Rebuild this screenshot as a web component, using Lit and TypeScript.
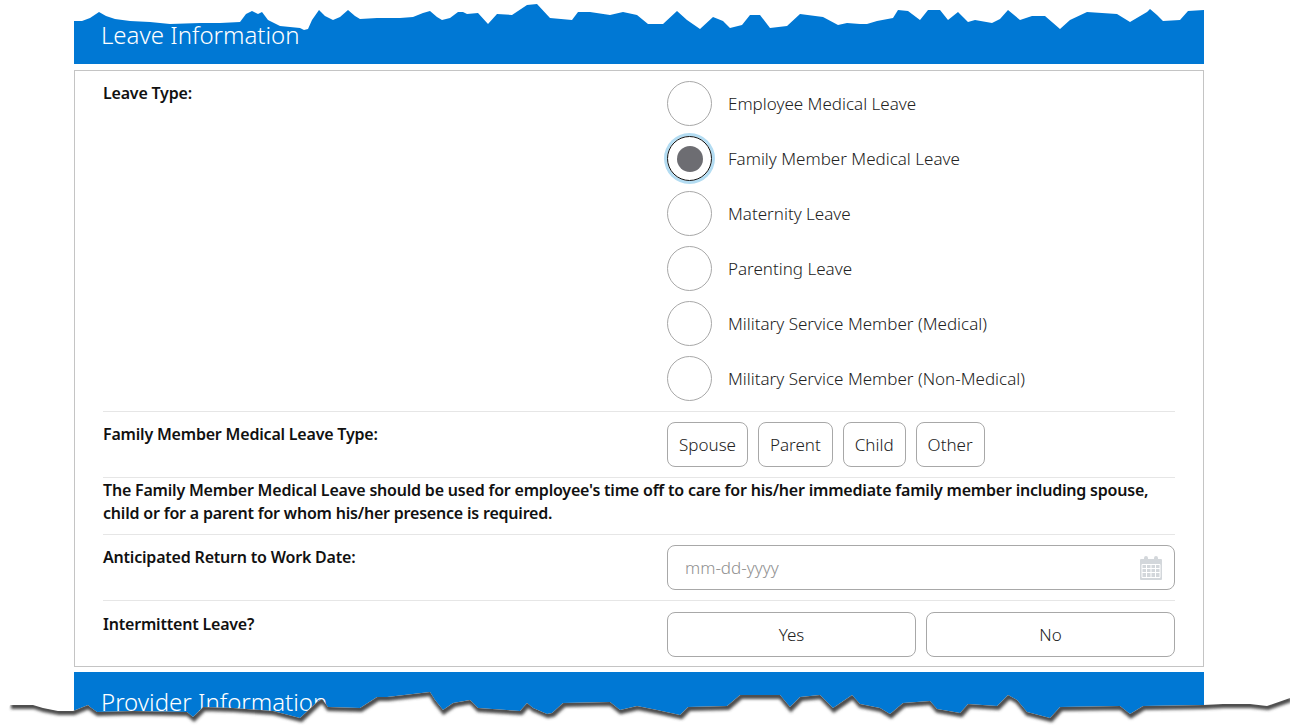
import { css, html, LitElement } from "lit";
import { customElement } from "lit/decorators.js";

// torn paper edges, traced from the screenshot as x,y pairs
const TOP_EDGE =
  "74,21 82,21 90,18 99,12 106,16 115,19 130,21 150,22 170,24 200,23 220,23 240,22 246,14 252,11 258,14 262,12 268,20 280,26 300,28 304,30 308,29 312,20 319,10 325,16 333,20 340,17 348,10 355,16 360,19 377,18 400,18 413,17 423,13 430,11 437,17 442,20 450,18 458,12 463,12 467,14 478,13 488,24 497,14 512,15 527,5 537,4 550,18 572,20 578,12 590,12 610,15 623,12 637,15 648,24 663,24 677,11 687,20 700,29 713,17 723,21 730,28 742,25 750,15 760,15 770,28 787,26 800,14 823,17 838,25 847,23 860,24 867,24 877,21 893,18 898,10 908,11 920,20 928,10 940,10 948,20 958,12 968,22 975,20 992,23 1000,19 1008,10 1020,20 1032,16 1045,16 1060,29 1070,20 1087,12 1117,14 1130,22 1147,12 1150,9 1157,15 1163,21 1180,20 1188,11 1204,10";

const BOTTOM_EDGE =
  "10,705 33,705 43,708 58,711 73,711 88,705 90,707 97,712 133,711 187,712 193,717 203,707 233,708 273,711 300,718 317,702 322,699 328,707 360,708 377,697 387,697 430,692 435,700 443,710 453,703 470,700 478,708 520,711 527,703 533,708 547,714 552,713 563,703 610,702 620,710 637,706 657,710 680,715 688,707 727,706 740,695 780,695 790,707 800,697 820,695 833,708 852,695 860,704 880,708 890,714 903,703 930,701 937,709 960,713 968,704 997,706 1008,695 1017,700 1027,712 1050,718 1060,707 1120,706 1130,714 1143,706 1203,705 1223,704 1250,704 1267,706 1290,698";

const LEAVE_TYPES = [
  "Employee Medical Leave",
  "Family Member Medical Leave",
  "Maternity Leave",
  "Parenting Leave",
  "Military Service Member (Medical)",
  "Military Service Member (Non-Medical)",
];

const RELATIONS = ["Spouse", "Parent", "Child", "Other"];

@customElement("app-root")
export class AppRoot extends LitElement {
  static styles = css`
    :host {
      display: block;
      position: relative;
      width: 1290px;
      height: 725px;
      overflow: hidden;
      background: #fff;
      font-family: "Noto Sans", sans-serif;
      color: #222;
    }

    .page {
      width: 1130px;
      margin-left: 74px;
    }

    .section-head {
      background: #0078d4;
      color: #fff;
      font-size: 24px;
      font-weight: 300;
      line-height: 30px;
      padding-left: 27px;
    }
    .section-head.first {
      height: 64px;
      padding-top: 20px;
      box-sizing: border-box;
    }
    .section-head.next {
      height: 53px;
      margin-top: 5px;
      padding-top: 15px;
      box-sizing: border-box;
    }

    .panel {
      margin-top: 6px;
      height: 597px;
      box-sizing: border-box;
      border: 1px solid #c4c4c4;
      padding: 0 28px;
    }

    .row {
      display: grid;
      grid-template-columns: 564px 508px;
      padding: 10px 0;
      border-bottom: 1px solid #e6e6e6;
    }
    .row.last {
      border-bottom: 0;
      padding-top: 11px;
    }
    .row.note {
      display: block;
      padding: 1px 0 9px;
    }

    .label,
    .note {
      font-size: 16px;
      font-weight: 600;
      line-height: 23px;
      color: #111;
      letter-spacing: -0.2px;
    }
    .label {
      padding-top: 1px;
    }

    .radios {
      display: flex;
      flex-direction: column;
      gap: 10px;
    }
    .radio {
      display: flex;
      align-items: center;
      gap: 16px;
      height: 45px;
      font-size: 17px;
      font-weight: 300;
    }
    .dot {
      width: 45px;
      height: 45px;
      box-sizing: border-box;
      border: 1px solid #a8a8a8;
      border-radius: 50%;
      display: flex;
      align-items: center;
      justify-content: center;
    }
    .dot.on {
      border-color: #111;
      box-shadow: 0 0 0 3px #b3dcf2;
    }
    .dot.on::after {
      content: "";
      width: 26px;
      height: 26px;
      border-radius: 50%;
      background: #6d6d72;
    }

    .choices {
      display: flex;
      gap: 10px;
    }
    button {
      height: 45px;
      box-sizing: border-box;
      background: #fff;
      border: 1px solid #a8a8a8;
      border-radius: 8px;
      font: 300 17px "Noto Sans", sans-serif;
      color: #222;
      padding: 0 11px;
    }
    .split {
      display: grid;
      grid-template-columns: 1fr 1fr;
      gap: 10px;
    }

    .date {
      height: 45px;
      box-sizing: border-box;
      border: 1px solid #a8a8a8;
      border-radius: 8px;
      display: flex;
      align-items: center;
      justify-content: space-between;
      padding: 0 12px 0 17px;
      font-size: 17px;
      font-weight: 300;
      color: #8f8f8f;
    }

    .tear {
      position: absolute;
      inset: 0;
      pointer-events: none;
    }
  `;

  render() {
    return html`
      <div class="page">
        <div class="section-head first">Leave Information</div>
        <div class="panel">
          <div class="row">
            <div class="label">Leave Type:</div>
            <div class="radios">
              ${LEAVE_TYPES.map(
                (t, i) => html`
                  <div class="radio">
                    <span class="dot ${i === 1 ? "on" : ""}"></span>${t}
                  </div>
                `
              )}
            </div>
          </div>
          <div class="row">
            <div class="label">Family Member Medical Leave Type:</div>
            <div class="choices">
              ${RELATIONS.map((r) => html`<button>${r}</button>`)}
            </div>
          </div>
          <div class="row note">
            The Family Member Medical Leave should be used for employee's time
            off to care for his/her immediate family member including spouse,
            child or for a parent for whom his/her presence is required.
          </div>
          <div class="row">
            <div class="label">Anticipated Return to Work Date:</div>
            <div class="date">
              <span>mm-dd-yyyy</span>
              <svg width="22" height="24" viewBox="0 0 22 24">
                <path
                  fill="#d3d7db"
                  d="M1 3h3V2a2 2 0 0 1 4 0v1h6V2a2 2 0 0 1 4 0v1h3a1 1 0 0 1 1 1v19a1 1 0 0 1-1 1H1a1 1 0 0 1-1-1V4a1 1 0 0 1 1-1z"
                />
                <path
                  stroke="#fff"
                  fill="none"
                  d="M2 8.500h18v13H2zM2 12.500h18M2 16.500h18M6.500 8v14M11 8v14M15.500 8v14"
                />
              </svg>
            </div>
          </div>
          <div class="row last">
            <div class="label">Intermittent Leave?</div>
            <div class="split">
              <button>Yes</button>
              <button>No</button>
            </div>
          </div>
        </div>
        <div class="section-head next">Provider Information</div>
      </div>

      <svg class="tear" width="1290" height="725" viewBox="0 0 1290 725">
        <defs>
          <filter id="soft" x="-5%" y="-50%" width="110%" height="200%">
            <feGaussianBlur stdDeviation="1.600" />
          </filter>
          <clipPath id="below">
            <polygon points="0,725 ${BOTTOM_EDGE} 1290,725" />
          </clipPath>
        </defs>
        <polygon fill="#fff" points="74,0 ${TOP_EDGE} 1204,0" />
        <polygon fill="#fff" points="0,725 0,705 ${BOTTOM_EDGE} 1290,725" />
        <g clip-path="url(#below)">
          <polyline
            fill="none"
            stroke="#4a4a4a"
            stroke-width="6"
            filter="url(#soft)"
            transform="translate(1 1)"
            points="${BOTTOM_EDGE}"
          />
        </g>
      </svg>
    `;
  }
}
